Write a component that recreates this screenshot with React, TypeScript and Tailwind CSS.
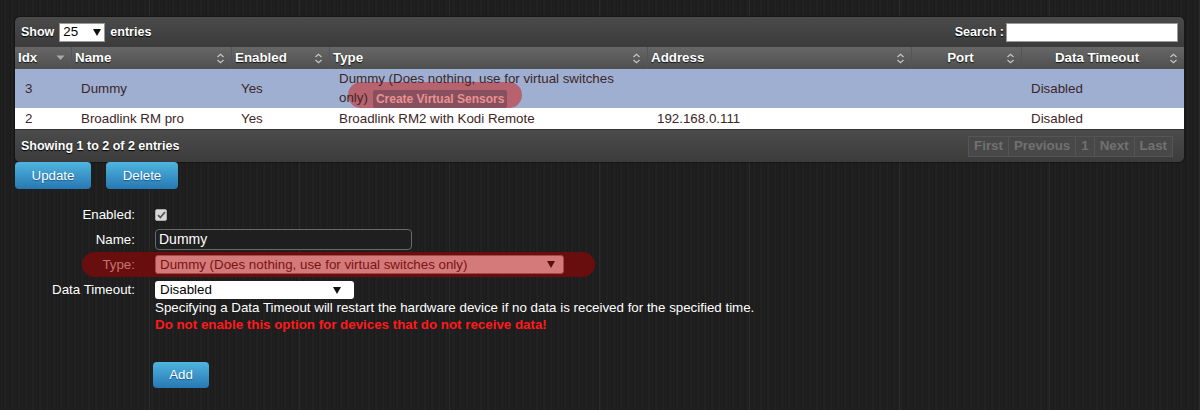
import React from "react";

const columns = [
  { label: "Idx", arrow: "down", center: false },
  { label: "Name", arrow: "both", center: false },
  { label: "Enabled", arrow: "both", center: false },
  { label: "Type", arrow: "both", center: false },
  { label: "Address", arrow: "both", center: false },
  { label: "Port", arrow: "both", center: true },
  { label: "Data Timeout", arrow: "both", center: true },
];

const SortIcon = ({ kind }: { kind: string }) => {
  if (kind === "down") {
    return (
      <svg width="9" height="6" viewBox="0 0 9 6" className="shrink-0">
        <path d="M0.5 0.5 L8.5 0.5 L4.5 5 Z" fill="#a9a9a9" />
      </svg>
    );
  }
  return (
    <svg width="9" height="11" viewBox="0 0 9 11" className="shrink-0">
      <path d="M1.5 4 L4.5 1.3 L7.5 4 M1.5 7 L4.5 9.7 L7.5 7" stroke="#c4c4c4" strokeWidth="1.3" fill="none" />
    </svg>
  );
};

const Arrow = ({ color = "#111" }: { color?: string }) => (
  <svg width="8" height="7" viewBox="0 0 8 7">
    <path d="M0 0 L8 0 L4 7 Z" fill={color} />
  </svg>
);

const grid = "grid grid-cols-[56px_160px_98px_318px_264px_110px_163px]";

const App = () => {
  return (
    <div className="w-[1200px] h-[410px] overflow-hidden bg-[#1d1d1d] bg-[repeating-linear-gradient(90deg,transparent_0px,transparent_149px,#2b2b2b_149px,#2b2b2b_150px),repeating-linear-gradient(90deg,#1c1c1c_0px,#212121_2px,#1a1a1a_3px,#232323_5px,#1d1d1d_7px)] font-['Liberation_Sans',Arial,sans-serif] text-[13.33px] pt-[17px]">
      <div className="ml-[15px] w-[1169px]">
        {/* table panel */}
        <div className="rounded-[5px] overflow-hidden shadow-[0_0_2px_#000]">
          <div className="h-[30px] flex items-center justify-between px-[6px] bg-linear-to-b from-[#4a4a4a] to-[#3b3b3b] text-white font-bold text-[12.5px] [text-shadow:0_1px_1px_#000]">
            <div className="flex items-center">
              <span>Show</span>
              <div className="ml-[5px] w-[46px] h-[19px] bg-white border border-[#999] flex items-center justify-between px-[3px] text-black font-normal text-[13.33px] [text-shadow:none]">
                <span>25</span>
                <Arrow />
              </div>
              <span className="ml-[5px]">entries</span>
            </div>
            <div className="flex items-center">
              <span>Search :</span>
              <div className="ml-[2px] w-[172px] h-[19px] bg-white border border-[#999]" />
            </div>
          </div>

          <div className={`${grid} h-[22px] bg-linear-to-b from-[#676767] to-[#4f4f4f] text-white font-bold [text-shadow:0_1px_1px_#111]`}>
            {columns.map((c, i) => (
              <div
                key={c.label}
                className={`flex items-center pl-[3px] pr-[6px] ${i > 0 ? "border-l border-[#555]" : ""}`}
              >
                <span className={`flex-1 ${c.center ? "text-center" : ""}`}>{c.label}</span>
                <SortIcon kind={c.arrow} />
              </div>
            ))}
          </div>

          <div className={`${grid} h-[39px] bg-[#9eafd2] text-[#3d2626] items-center`}>
            <div className="pl-[10px]">3</div>
            <div className="pl-[10px]">Dummy</div>
            <div className="pl-[10px]">Yes</div>
            <div className="pl-[10px] relative leading-[19px]">
              <div className="absolute left-[19px] top-[13px] w-[174px] h-[26px] rounded-full bg-[#b7636f]" />
              <div className="relative whitespace-nowrap">
                Dummy (Does nothing, use for virtual switches
                <br />
                <span>only)</span>
                <span className="ml-[5px] inline-block h-[18px] leading-[18px] px-[3px] rounded-[2px] bg-[#86505f] text-[#ec9090] font-bold text-[12px] align-middle">
                  Create Virtual Sensors
                </span>
              </div>
            </div>
            <div className="pl-[10px]"></div>
            <div className="pl-[10px]"></div>
            <div className="pl-[10px]">Disabled</div>
          </div>

          <div className={`${grid} h-[21px] bg-white text-[#3d2626] items-center`}>
            <div className="pl-[10px]">2</div>
            <div className="pl-[10px]">Broadlink RM pro</div>
            <div className="pl-[10px]">Yes</div>
            <div className="pl-[10px]">Broadlink RM2 with Kodi Remote</div>
            <div className="pl-[10px]">192.168.0.111</div>
            <div className="pl-[10px]"></div>
            <div className="pl-[10px]">Disabled</div>
          </div>

          <div className="h-[33px] flex items-center justify-between pl-[6px] pr-[11px] bg-linear-to-b from-[#4b4b4b] to-[#3c3c3c] border-t border-[#333]">
            <span className="text-white font-bold text-[12.5px] [text-shadow:0_1px_1px_#000]">Showing 1 to 2 of 2 entries</span>
            <div className="flex h-[21px] border border-[#555] bg-[#484848] text-[#717171] font-bold text-[13.33px]">
              {["First", "Previous", "1", "Next", "Last"].map((p, i) => (
                <div
                  key={p}
                  className={`flex items-center px-[5px] ${i > 0 ? "border-l border-[#555]" : ""}`}
                >
                  {p}
                </div>
              ))}
            </div>
          </div>
        </div>

        {/* action buttons */}
        <div className="flex gap-[15px]">
          <button className="w-[76px] h-[27px] rounded-[4px] bg-linear-to-b from-[#4fb5de] to-[#2878b3] text-white [text-shadow:0_1px_1px_#1a5a8a]">
            Update
          </button>
          <button className="w-[72px] h-[27px] rounded-[4px] bg-linear-to-b from-[#4fb5de] to-[#2878b3] text-white [text-shadow:0_1px_1px_#1a5a8a]">
            Delete
          </button>
        </div>
      </div>

      {/* form */}
      <div className="flex flex-col text-white">
        <div className="mt-[18px] h-[16px] flex items-center">
          <span className="w-[135px] text-right">Enabled:</span>
          <div className="ml-[20px] w-[12px] h-[12px] rounded-[2px] bg-[#d8d8d8] border border-[#aaa] flex items-center justify-center">
            <svg width="9" height="8" viewBox="0 0 9 8">
              <path d="M1 4.2 L3.4 6.5 L8 1" stroke="#555" strokeWidth="1.8" fill="none" />
            </svg>
          </div>
        </div>

        <div className="mt-[6px] h-[21px] flex items-center">
          <span className="w-[135px] text-right">Name:</span>
          <div className="ml-[20px] w-[257px] h-[21px] rounded-[4px] border border-[#6a6a6a] bg-[#1f1f1f] flex items-center px-[3px] text-[14px]">
            Dummy
          </div>
        </div>

        <div className="mt-[2px] ml-[82px] w-[513px] h-[25px] rounded-full bg-[#690e0e] flex items-center">
          <span className="w-[53px] text-right text-[#c37575]">Type:</span>
          <div className="ml-[20px] w-[409px] h-[19px] rounded-[3px] border border-[#a54848] bg-[#d57a7a] flex items-center justify-between pl-[4px] pr-[8px] text-[#7a1313]">
            <span>Dummy (Does nothing, use for virtual switches only)</span>
            <Arrow color="#5a0f0f" />
          </div>
        </div>

        <div className="mt-[4px] h-[18px] flex items-center">
          <span className="w-[135px] text-right">Data Timeout:</span>
          <div className="ml-[20px] w-[199px] h-[18px] rounded-[3px] bg-white flex items-center justify-between pl-[5px] pr-[13px] text-black">
            <span>Disabled</span>
            <Arrow />
          </div>
        </div>

        <div className="ml-[155px] leading-[17px]">
          <div>
            Specifying a Data Timeout will restart the hardware device if no data is received for the specified time.
          </div>
          <div className="text-[#ff1a1a] font-bold">
            Do not enable this option for devices that do not receive data!
          </div>
        </div>

        <div className="ml-[153px] mt-[29px]">
          <button className="w-[56px] h-[26px] rounded-[4px] bg-linear-to-b from-[#4fb5de] to-[#2878b3] text-white [text-shadow:0_1px_1px_#1a5a8a]">
            Add
          </button>
        </div>
      </div>
    </div>
  );
};

export default App;
